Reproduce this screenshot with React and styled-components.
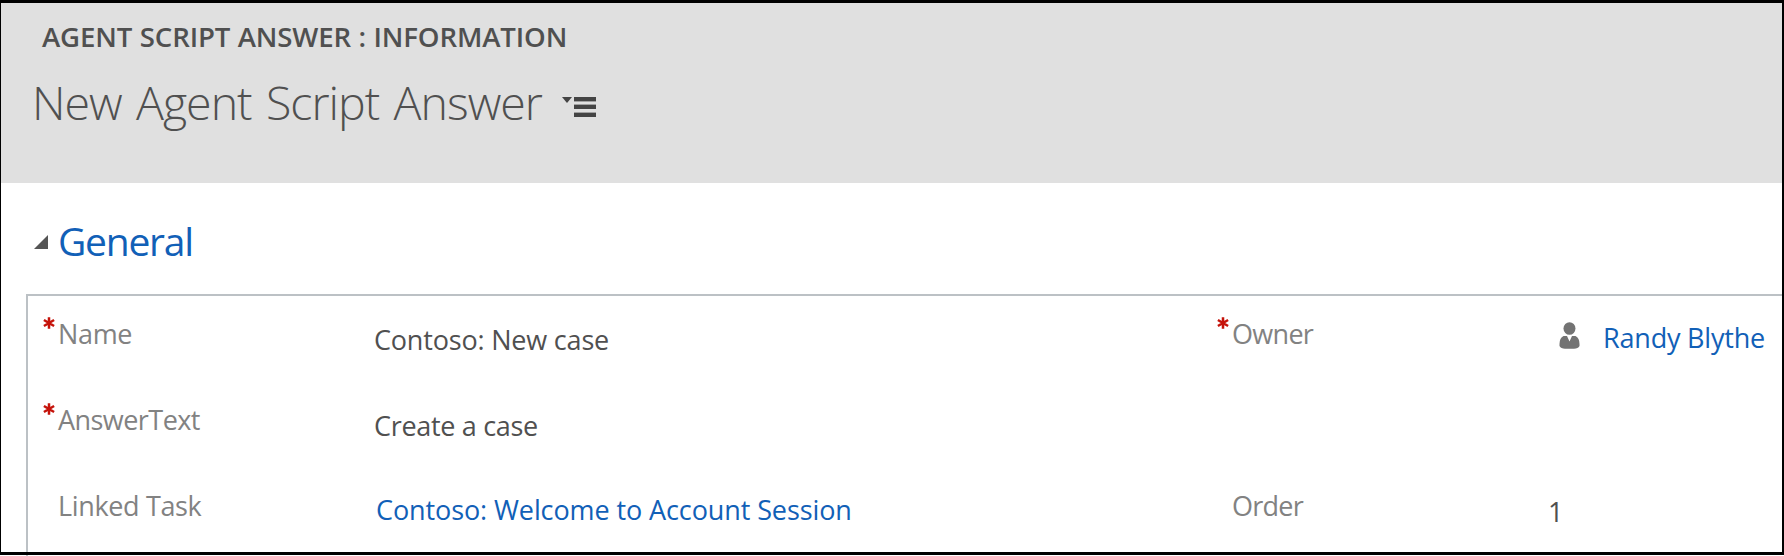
import React from "react";
import styled, { createGlobalStyle } from "styled-components";

const GlobalStyle = createGlobalStyle`
  *, *::before, *::after { box-sizing: border-box; }
  body {
    margin: 0;
    background: #fff;
    font-family: "Open Sans", "Noto Sans", sans-serif;
    overflow: hidden;
  }
`;

const Page = styled.div`
  width: 1784px;
  height: 556px;
`;

const Frame = styled.main`
  height: 555px;
  border: solid #000;
  border-width: 3px 2px 3px 1px;
  overflow: hidden;
  display: flex;
  flex-direction: column;
`;

const Header = styled.header`
  flex: none;
  height: 180px;
  padding: 14px 0 0 31px;
  background: #e0e0e0;
  color: #505050;
`;

const EntityName = styled.div`
  padding-left: 10px;
  font-size: 27.6px;
  font-weight: 600;
  line-height: 38px;
  letter-spacing: -0.12px;
  word-spacing: 0.4px;
  white-space: nowrap;
`;

const TitleRow = styled.div`
  display: flex;
  margin-top: 15px;
`;

const Title = styled.h1`
  margin: 0;
  font-size: 46.5px;
  font-weight: 300;
  line-height: 64px;
  letter-spacing: -0.99px;
  word-spacing: 3.2px;
  white-space: nowrap;
`;

const MenuIcon = styled.svg`
  flex: none;
  width: 34px;
  height: 20px;
  margin: 27px 0 0 20px;
`;

const SectionHeader = styled.div`
  flex: none;
  display: flex;
  padding: 31px 0 27px 33px;
`;

const Collapse = styled.svg`
  width: 14px;
  height: 14px;
  margin: 21px 10px 0 0;
`;

const SectionTitle = styled.h2`
  margin: 0;
  font-size: 39px;
  font-weight: 400;
  line-height: 53px;
  letter-spacing: -1.25px;
  color: #1160b7;
`;

const Panel = styled.section`
  flex: 1;
  margin-left: 25px;
  padding: 19px 0 0 15px;
  border: solid #bcc1c5;
  border-width: 2px 0 0 2px;
  overflow: hidden;
`;

const Row = styled.div`
  display: grid;
  grid-template-columns: 331px 843px 331px 1fr;
  height: 86px;
  font-size: 27px;
  line-height: 37px;
  white-space: nowrap;
`;

const Label = styled.div`
  display: grid;
  grid-template-columns: 15px 1fr;
  align-items: start;
  color: #828282;
  letter-spacing: ${(p) => p.$spacing}px;
`;

const LabelText = styled.span`
  grid-column: 2;
`;

const RequiredMark = styled.svg`
  width: 12px;
  height: 12px;
  margin-top: 2px;
`;

const Value = styled.div`
  padding-top: 6px;
  color: #505050;
  letter-spacing: ${(p) => p.$spacing}px;
`;

const Lookup = styled.div`
  display: flex;
  padding: 4px 0 0 ${(p) => p.$indent}px;
  color: #1160b7;
  letter-spacing: ${(p) => p.$spacing}px;
`;

const Person = styled.svg`
  flex: none;
  width: 21px;
  height: 27px;
  margin: 3px 23px 0 0;
`;

const FrameTail = styled.div`
  width: 2px;
  height: 1px;
  margin-left: 26px;
  background: #bcc1c5;
`;

function Field({ required, spacing, children }) {
  return (
    <Label $spacing={spacing}>
      {required && (
        <RequiredMark viewBox="0 0 12 12" stroke="#c5130a" strokeWidth="2.5">
          <path d="M6 0.3V11.7M0.9 3L11.1 9M11.1 3L0.9 9" />
        </RequiredMark>
      )}
      <LabelText>{children}</LabelText>
    </Label>
  );
}

export default function App() {
  return (
    <Page>
      <GlobalStyle />
      <Frame>
        <Header>
          <EntityName>AGENT SCRIPT ANSWER : INFORMATION</EntityName>
          <TitleRow>
            <Title>New Agent Script Answer</Title>
            <MenuIcon viewBox="0 0 34 20" fill="#444">
              <path d="M0 0H10L5 6Z" />
              <path d="M12 0H34V4H12ZM12 8H34V12H12ZM12 16H34V20H12Z" />
              <path d="M12 4H34V5H12ZM12 7H34V8H12ZM12 15H34V16H12Z" opacity="0.4" />
            </MenuIcon>
          </TitleRow>
        </Header>
        <SectionHeader>
          <Collapse viewBox="0 0 14 14">
            <path d="M14 0V14H0Z" fill="#555" />
          </Collapse>
          <SectionTitle>General</SectionTitle>
        </SectionHeader>
        <Panel>
          <Row>
            <Field required spacing={-0.34}>Name</Field>
            <Value $spacing={-0.19}>Contoso: New case</Value>
            <Field required spacing={-0.7}>Owner</Field>
            <Lookup $indent={11} $spacing={-0.2}>
              <Person viewBox="0 0 21 27" fill="#737373">
                <ellipse cx="10.5" cy="6.5" rx="6" ry="6.3" />
                <path d="M4.5 14L8 14L10.5 19.5L13 14L16.5 14Q20.5 16 20.5 22V24Q19 26.7 15 26.7H6Q2 26.7 0.5 24V22Q0.5 16 4.5 14Z" />
              </Person>
              Randy Blythe
            </Lookup>
          </Row>
          <Row>
            <Field required spacing={-0.55}>AnswerText</Field>
            <Value $spacing={-0.32}>Create a case</Value>
          </Row>
          <Row>
            <Field spacing={-0.35}>Linked Task</Field>
            <Lookup $indent={2} $spacing={-0.1}>Contoso: Welcome to Account Session</Lookup>
            <Field spacing={-0.75}>Order</Field>
            <Value $spacing={0}>1</Value>
          </Row>
        </Panel>
      </Frame>
      <FrameTail />
    </Page>
  );
}
